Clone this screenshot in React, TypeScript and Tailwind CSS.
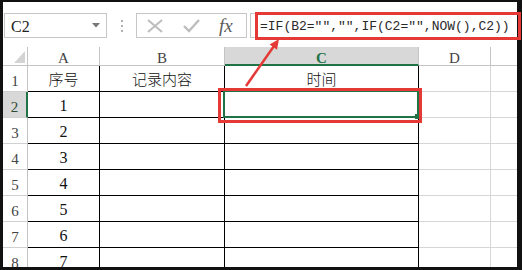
import React from "react";

const mono = "font-['Liberation_Mono','DejaVu_Sans_Mono',monospace]";
const serif = "font-['Liberation_Serif',serif]";
const cjk = "font-['Noto_Sans_CJK_SC',sans-serif]";

function RowHeader({ n, selected }: { n: number; selected?: boolean }) {
  return (
    <div
      className={
        "w-[25px] shrink-0 flex items-end justify-center border-b border-[#d0d0d0] " +
        serif +
        " text-[15px] leading-none " +
        (selected
          ? "bg-[#d8d8d8] border-r-2 border-r-[#217346] text-[#2e4a36]"
          : "bg-white border-r border-r-[#c4c4c4] text-[#444]")
      }
    >
      <span className="pb-[2px]">{n}</span>
    </div>
  );
}

function Row({ n, a, b, c }: { n: number; a?: string; b?: string; c?: string }) {
  const isCjk = (s?: string) => !!s && /[^\x00-\x7f]/.test(s);
  const cellText = (s?: string) =>
    s ? (
      <span
        className={
          isCjk(s)
            ? cjk + " font-light text-[15px] leading-none text-[#111]"
            : serif + " text-[16px] leading-none text-[#111] pt-[3px]"
        }
      >
        {s}
      </span>
    ) : null;
  return (
    <div className="flex shrink-0 h-[26px]">
      <RowHeader n={n} selected={n === 2} />
      <div className="w-[72px] shrink-0 border-r border-b border-black flex items-center justify-center">{cellText(a)}</div>
      <div className="w-[125px] shrink-0 border-r border-b border-black flex items-center justify-center">{cellText(b)}</div>
      <div className="w-[194px] shrink-0 border-r border-b border-black flex items-center justify-center">{cellText(c)}</div>
      <div className="w-[72px] shrink-0 border-r border-b border-[#d6d6d6]" />
      <div className="w-[26px] shrink-0 border-b border-[#d6d6d6]" />
    </div>
  );
}

export default function App() {
  return (
    <div className="relative w-[522px] h-[270px] overflow-hidden bg-white">
      <div className="w-[522px] h-[270px] border-t-2 border-l-[3px] border-r-[5px] border-b-[3px] border-[#111] flex flex-col overflow-hidden">
        {/* toolbar */}
        <div className="h-[45px] shrink-0 flex items-start pt-[11px]">
          <div className="ml-[1px] w-[103px] h-[25px] border border-[#c6c6c6] flex items-center pl-[6px] pr-[6px]">
            <span className={serif + " text-[16px] leading-none text-[#222] pt-[2px]"}>C2</span>
            <svg className="ml-auto" width="8" height="5" viewBox="0 0 8 5">
              <polygon points="0,0 8,0 4,4.5" fill="#777" />
            </svg>
          </div>
          <div className="ml-[14px] mt-[7px] flex flex-col gap-[3px]">
            <div className="w-[2px] h-[2px] bg-[#b0b0b0]" />
            <div className="w-[2px] h-[2px] bg-[#b0b0b0]" />
            <div className="w-[2px] h-[2px] bg-[#b0b0b0]" />
          </div>
          <div className="ml-[13px] w-[111px] h-[25px] border border-[#c6c6c6] flex items-center">
            <svg className="ml-[10px]" width="16" height="14" viewBox="0 0 16 14">
              <path d="M1 1 L15 13 M15 1 L1 13" stroke="#bdbdbd" strokeWidth="2" />
            </svg>
            <svg className="ml-[20px]" width="17" height="14" viewBox="0 0 17 14">
              <path d="M1 7 L6 12 L16 1" stroke="#bdbdbd" strokeWidth="2.4" fill="none" />
            </svg>
            <span className={"ml-[19px] italic text-[19px] leading-none text-[#5a5a5a] " + serif}>fx</span>
          </div>
          <div className="ml-[3px] flex-1 h-[25px] border-y border-l border-[#c6c6c6] flex items-center pl-[9px] overflow-hidden">
            <span className={mono + " text-[13px] whitespace-nowrap text-[#2a2a2a] pt-[2px]"}>
              =IF(B2="","",IF(C2="",NOW(),C2))
            </span>
          </div>
        </div>
        {/* column headers */}
        <div className="flex h-[19px] shrink-0">
          <div className="w-[25px] shrink-0 border-r border-b border-[#c4c4c4] flex items-end justify-end pr-[2px] pb-[2px]">
            <svg width="11" height="12" viewBox="0 0 11 12">
              <polygon points="11,0 11,12 0,12" fill="#d4d4d4" />
            </svg>
          </div>
          <div className={"w-[72px] shrink-0 border-r border-b border-[#c4c4c4] flex items-center justify-center pt-[4px] text-[15px] leading-none text-[#444] " + serif}>A</div>
          <div className={"w-[125px] shrink-0 border-r border-b border-[#c4c4c4] flex items-center justify-center pt-[4px] text-[15px] leading-none text-[#444] " + serif}>B</div>
          <div className={"w-[194px] shrink-0 bg-[#d8d8d8] border-r border-r-[#c4c4c4] border-b-2 border-b-[#217346] flex items-center justify-center pt-[5px] text-[15px] leading-none font-bold text-[#217346] " + serif}>C</div>
          <div className={"w-[72px] shrink-0 border-r border-b border-[#c4c4c4] flex items-center justify-center pt-[4px] text-[15px] leading-none text-[#444] " + serif}>D</div>
          <div className="w-[26px] shrink-0 border-b border-[#c4c4c4]" />
        </div>
        <Row n={1} a="序号" b="记录内容" c="时间" />
        <Row n={2} a="1" />
        <Row n={3} a="2" />
        <Row n={4} a="3" />
        <Row n={5} a="4" />
        <Row n={6} a="5" />
        <Row n={7} a="6" />
        <Row n={8} a="7" />
      </div>
      <svg className="absolute inset-0 pointer-events-none" width="522" height="270" viewBox="0 0 522 270">
        <rect x="224" y="91" width="194" height="26" fill="none" stroke="#217346" strokeWidth="2" />
        <rect x="415" y="114" width="5" height="5" fill="#217346" />
        <rect x="219.5" y="89.5" width="201" height="32" fill="none" stroke="#e53935" strokeWidth="3" />
        <rect x="256.5" y="13.5" width="263" height="25" fill="none" stroke="#e53935" strokeWidth="3" />
        <line x1="246" y1="86" x2="274" y2="46" stroke="#e53935" strokeWidth="2.5" />
        <polygon points="279,39 277,49.8 269.6,44.6" fill="#e53935" />
      </svg>
    </div>
  );
}
